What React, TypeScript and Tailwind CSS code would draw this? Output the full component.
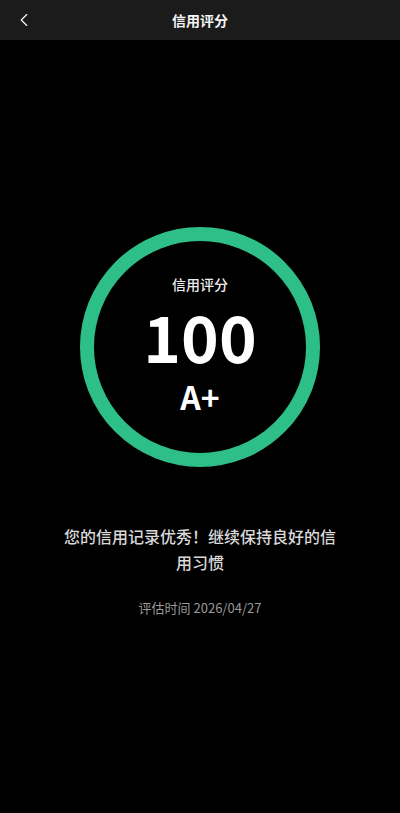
import { ChevronLeft } from "lucide-react"

const font = { fontFamily: '"Noto Sans CJK SC", "Noto Sans", sans-serif' }

export default function App() {
  return (
    <div className="min-h-[813px] w-full bg-black text-white" style={font}>
      <header className="relative flex h-10 items-center justify-center bg-[#1b1b1b]">
        <button className="absolute left-[12px] top-0 flex h-10 w-6 items-center justify-center text-white">
          <ChevronLeft size={22} strokeWidth={1.25} />
        </button>
        <h1 className="text-[14px] font-bold text-[#f5f5f5]">信用评分</h1>
      </header>

      <main className="flex flex-col items-center">
        <div className="mt-[187px] flex h-[240px] w-[240px] flex-col items-center rounded-full border-[14px] border-[#2ebf88]">
          <p className="mt-[33px] text-[14px] font-medium leading-[20px] text-[#ececec]">信用评分</p>
          <p className="mt-[9px] text-[64px] font-bold leading-[64px] text-white">100</p>
          <p className="mt-[13px] text-[32px] font-bold leading-[32px] text-white">A+</p>
        </div>

        <p className="mt-[56px] w-[282px] text-center text-[16px] font-medium leading-[26px] text-[#d9d9d9]">
          您的信用记录优秀！继续保持良好的信用习惯
        </p>
        <p className="mt-[23px] text-[13px] text-[#9a9a9a]">评估时间 2026/04/27</p>
      </main>
    </div>
  )
}
